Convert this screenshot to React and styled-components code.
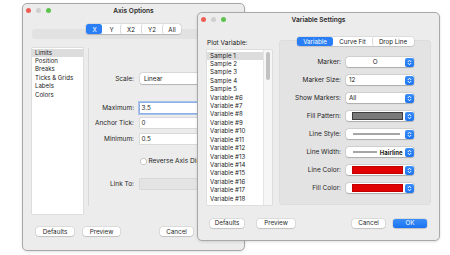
import React from 'react';
import styled, { createGlobalStyle } from 'styled-components';

const BLUE = '#2a7ff6';

const GlobalStyle = createGlobalStyle`
  html, body { margin: 0; padding: 0; background: #fff; }
  body { font-family: Inter, "Noto Sans", sans-serif; color: #222; }
`;

const Desktop = styled.div`
  position: relative;
  width: 450px;
  height: 255px;
  overflow: hidden;
  background: #fff;
`;

// windows sit on a free desktop, so they are placed by coordinates
const Window = styled.div`
  position: absolute;
  left: ${p => p.$x}px;
  top: ${p => p.$y}px;
  width: ${p => p.$w}px;
  height: ${p => p.$h}px;
  box-sizing: border-box;
  background: #ececec;
  border: 1px solid #a8a8a8;
  border-radius: 5px;
  box-shadow: 0 1px 3px rgba(0, 0, 0, 0.12);
  display: flex;
  flex-direction: column;
  overflow: hidden;
`;

const TitleBar = styled.div`
  flex: none;
  height: 13px;
  display: grid;
  grid-template-columns: 1fr auto 1fr;
  align-items: center;
`;

const Lights = styled.div`
  display: flex;
  gap: 5px;
  padding-left: 3px;
`;

const Light = styled.span`
  width: 5px;
  height: 5px;
  border-radius: 50%;
  background: ${p => p.$c};
`;

const Title = styled.div`
  font-size: 6.6px;
  font-weight: 600;
  color: #2b2b2b;
`;

const Segmented = styled.div`
  align-self: center;
  display: flex;
  height: ${p => p.$h}px;
  background: #fff;
  border-radius: 2.5px;
  box-shadow: 0 0 0 0.5px rgba(0, 0, 0, 0.12), 0 0.5px 1px rgba(0, 0, 0, 0.15);
  position: relative;
  z-index: 1;
  margin-top: ${p => p.$mt}px;
`;

const Segment = styled.div`
  width: ${p => p.$w}px;
  display: flex;
  align-items: center;
  justify-content: center;
  font-size: 6.2px;
  color: ${p => (p.$on ? '#fff' : '#222')};
  background: ${p => (p.$on ? BLUE : 'transparent')};
  border-radius: 2.5px;
  border-left: 0.5px solid ${p => (p.$sep ? '#dadada' : 'transparent')};
`;

const Band = styled.div`
  height: 10px;
  margin: -5px 9px 0;
  background: #e2e2e2;
  border-radius: 3px;
`;

const ListBox = styled.div`
  flex: none;
  width: ${p => p.$w}px;
  height: ${p => p.$h}px;
  margin-top: ${p => p.$mt || 0}px;
  background: #fff;
  box-shadow: 0 0 0 0.5px rgba(0, 0, 0, 0.12);
  display: flex;
  overflow: hidden;
`;

const ListItems = styled.div`
  flex: 1;
  padding-top: ${p => p.$pt}px;
`;

const ListItem = styled.div`
  height: 8.43px;
  line-height: 8.43px;
  padding-left: 3px;
  font-size: 6.1px;
  white-space: nowrap;
  background: ${p => (p.$sel ? '#dcdcdc' : 'transparent')};
`;

const ScrollTrack = styled.div`
  flex: none;
  width: 8px;
  background: #f6f6f6;
  border-left: 0.5px solid #e4e4e4;
  display: flex;
  justify-content: center;
  padding-top: 2px;
`;

const ScrollThumb = styled.div`
  width: 3.5px;
  height: 28px;
  border-radius: 2px;
  background: #c2c2c2;
`;

/* ---------- back window ---------- */

const AxisBody = styled.div`
  display: flex;
  padding: 0 9px;
  margin-top: 9px;
`;

const FormArea = styled.div`
  margin-left: 5px;
  height: 158px;
  border-left: 1px solid #d8d8d8;
  display: flex;
  flex-direction: column;
`;

const FormRow = styled.div`
  display: grid;
  grid-template-columns: 45px 90px;
  column-gap: 6px;
  align-items: center;
  height: ${p => p.$h || 10}px;
  margin-top: ${p => p.$mt}px;
`;

const Label = styled.div`
  text-align: right;
  font-size: 6.5px;
  white-space: nowrap;
  color: #1f1f1f;
`;

const TextField = styled.div`
  height: 10px;
  display: flex;
  align-items: center;
  padding-left: 1.5px;
  font-size: 6.3px;
  background: ${p => (p.$disabled ? '#e4e4e4' : '#fff')};
  box-shadow: ${p =>
    p.$focus
      ? '0 0 0 0.5px #6c9ee8, 0 0 0 2px rgba(90, 145, 230, 0.45)'
      : '0 0 0 0.5px rgba(0, 0, 0, 0.16)'};
`;

const CheckRow = styled.label`
  display: flex;
  align-items: center;
  gap: 2.5px;
  padding-left: 1px;
  font-size: 6.5px;
  white-space: nowrap;
`;

const CheckBox = styled.span`
  width: 5px;
  height: 5px;
  background: #fff;
  border-radius: 1.5px;
  box-shadow: 0 0 0 0.5px rgba(0, 0, 0, 0.3);
`;

/* ---------- shared controls ---------- */

const PopUp = styled.div`
  height: ${p => p.$h || 10}px;
  background: #fff;
  border-radius: 2.5px;
  box-shadow: 0 0 0 0.5px rgba(0, 0, 0, 0.14), 0 0.5px 1px rgba(0, 0, 0, 0.18);
  display: flex;
  align-items: center;
  font-size: 6.3px;
`;

const PopValue = styled.span`
  flex: 1;
  padding-left: ${p => (p.$center ? 0 : p.$pl || 3)}px;
  text-align: ${p => (p.$center ? 'center' : 'left')};
`;

const Swatch = styled.span`
  flex: 1;
  height: 8px;
  margin: 0 2px 0 6px;
  box-sizing: border-box;
  background: ${p => p.$c};
  border: 0.5px solid ${p => p.$b};
`;

const Stroke = styled.span`
  flex: ${p => (p.$w ? 'none' : 1)};
  width: ${p => p.$w || 0}px;
  height: 1.5px;
  margin: 0 ${p => (p.$w ? 0 : 5)}px 0 7px;
  background: #a6a6a6;
`;

const StrokeName = styled.span`
  margin: 0 2px 0 auto;
  font-weight: 700;
  font-size: 6px;
`;

const Stepper = styled.span`
  flex: none;
  width: 9px;
  height: 9px;
  margin-right: 0.5px;
  border-radius: 2px;
  background: linear-gradient(#3b8ef8, #1c74f0);
  display: flex;
  align-items: center;
  justify-content: center;
`;

const Chevrons = () => (
  <svg width="5" height="7" viewBox="0 0 5 7">
    <path
      d="M1.1 2.7 L2.5 1.2 L3.9 2.7 M1.1 4.3 L2.5 5.8 L3.9 4.3"
      fill="none"
      stroke="#fff"
      strokeWidth="0.9"
      strokeLinecap="round"
      strokeLinejoin="round"
    />
  </svg>
);

const Footer = styled.div`
  display: flex;
  align-items: center;
  margin-top: ${p => p.$mt}px;
  padding: 0 ${p => p.$pr}px 0 ${p => p.$pl}px;
`;

const Button = styled.div`
  width: ${p => p.$w}px;
  height: ${p => p.$h || 9.5}px;
  margin-left: ${p => p.$ml || 0}px;
  display: flex;
  align-items: center;
  justify-content: center;
  font-size: 6.3px;
  border-radius: 2.5px;
  color: ${p => (p.$primary ? '#fff' : '#2a2a2a')};
  background: ${p => (p.$primary ? 'linear-gradient(#3b8ef8, #1a72f0)' : '#fff')};
  box-shadow: 0 0 0 0.5px rgba(0, 0, 0, 0.12), 0 0.5px 1px rgba(0, 0, 0, 0.22);
`;

const Spacer = styled.div`
  flex: 1;
`;

/* ---------- front window ---------- */

const FrontBody = styled.div`
  display: grid;
  grid-template-columns: 65px 152px;
  column-gap: 7px;
  padding-left: 9px;
`;

const Column = styled.div`
  display: flex;
  flex-direction: column;
`;

const ColumnLabel = styled.div`
  margin-top: 13px;
  line-height: 8px;
  font-size: 6.5px;
`;

const GroupBox = styled.div`
  align-self: stretch;
  height: 165px;
  margin-top: -6px;
  box-sizing: border-box;
  padding-top: 17px;
  background: #e3e3e3;
  border-radius: 4px;
  box-shadow: inset 0 0 0 0.5px rgba(0, 0, 0, 0.05);
`;

const SettingsGrid = styled.div`
  display: grid;
  grid-template-columns: 62px 68px;
  grid-auto-rows: 10px;
  column-gap: 5px;
  row-gap: 8px;
  align-items: center;
`;

const Lights3 = () => (
  <Lights>
    <Light $c="#ee5e57" />
    <Light $c="#cfcfcf" />
    <Light $c="#5ec24f" />
  </Lights>
);

const axisItems = ['Limits', 'Position', 'Breaks', 'Ticks & Grids', 'Labels', 'Colors'];
const variables = [
  'Sample 1', 'Sample 2', 'Sample 3', 'Sample 4', 'Sample 5',
  ...Array.from({ length: 13 }, (_, i) => `Variable #${i + 6}`),
];

const AxisOptions = () => (
  <Window $x={22} $y={3} $w={223} $h={248}>
    <TitleBar>
      <Lights3 />
      <Title>Axis Options</Title>
      <span />
    </TitleBar>
    <Segmented $h={10} $mt={7}>
      <Segment $w={15} $on>X</Segment>
      <Segment $w={17}>Y</Segment>
      <Segment $w={20} $sep>X2</Segment>
      <Segment $w={20} $sep>Y2</Segment>
      <Segment $w={18} $sep>All</Segment>
    </Segmented>
    <Band />
    <AxisBody>
      <ListBox $w={51} $h={166}>
        <ListItems $pt={0.5}>
          {axisItems.map((t, i) => (
            <ListItem key={t} $sel={i === 0}>{t}</ListItem>
          ))}
        </ListItems>
      </ListBox>
      <FormArea>
        <FormRow $mt={25} $h={11}>
          <Label>Scale:</Label>
          <PopUp $h={11}><PopValue $pl={4}>Linear</PopValue></PopUp>
        </FormRow>
        <FormRow $mt={19}>
          <Label>Maximum:</Label>
          <TextField $focus>3.5</TextField>
        </FormRow>
        <FormRow $mt={5}>
          <Label>Anchor Tick:</Label>
          <TextField>0</TextField>
        </FormRow>
        <FormRow $mt={6}>
          <Label>Minimum:</Label>
          <TextField>0.5</TextField>
        </FormRow>
        <FormRow $mt={12}>
          <span />
          <CheckRow><CheckBox />Reverse Axis Direction</CheckRow>
        </FormRow>
        <FormRow $mt={13}>
          <Label>Link To:</Label>
          <TextField $disabled />
        </FormRow>
      </FormArea>
    </AxisBody>
    <Footer $mt={13} $pl={13} $pr={10}>
      <Button $w={38} $h={9}>Defaults</Button>
      <Button $w={37} $h={9} $ml={9}>Preview</Button>
      <Spacer />
      <Button $w={33} $h={9}>Cancel</Button>
      <Button $w={33} $h={9} $ml={8} $primary>OK</Button>
    </Footer>
  </Window>
);

const VariableSettings = () => (
  <Window $x={197} $y={12} $w={243} $h={229}>
    <TitleBar>
      <Lights3 />
      <Title>Variable Settings</Title>
      <span />
    </TitleBar>
    <FrontBody>
      <Column>
        <ColumnLabel>Plot Variable:</ColumnLabel>
        <ListBox $w={65} $h={155} $mt={3}>
          <ListItems $pt={1.5}>
            {variables.map((t, i) => (
              <ListItem key={t} $sel={i === 0}>{t}</ListItem>
            ))}
          </ListItems>
          <ScrollTrack><ScrollThumb /></ScrollTrack>
        </ListBox>
      </Column>
      <Column>
        <Segmented $h={9} $mt={11}>
          <Segment $w={35} $on>Variable</Segment>
          <Segment $w={38}>Curve Fit</Segment>
          <Segment $w={41} $sep>Drop Line</Segment>
        </Segmented>
        <GroupBox>
          <SettingsGrid>
            <Label>Marker:</Label>
            <PopUp><PopValue $center>O</PopValue><Stepper><Chevrons /></Stepper></PopUp>
            <Label>Marker Size:</Label>
            <PopUp><PopValue>12</PopValue><Stepper><Chevrons /></Stepper></PopUp>
            <Label>Show Markers:</Label>
            <PopUp><PopValue>All</PopValue><Stepper><Chevrons /></Stepper></PopUp>
            <Label>Fill Pattern:</Label>
            <PopUp><Swatch $c="#7a7a7a" $b="#3e3e3e" /><Stepper><Chevrons /></Stepper></PopUp>
            <Label>Line Style:</Label>
            <PopUp><Stroke /><Stepper><Chevrons /></Stepper></PopUp>
            <Label>Line Width:</Label>
            <PopUp><Stroke $w={24} /><StrokeName>Hairline</StrokeName><Stepper><Chevrons /></Stepper></PopUp>
            <Label>Line Color:</Label>
            <PopUp><Swatch $c="#e00000" $b="#c20000" /><Stepper><Chevrons /></Stepper></PopUp>
            <Label>Fill Color:</Label>
            <PopUp><Swatch $c="#e00000" $b="#c20000" /><Stepper><Chevrons /></Stepper></PopUp>
          </SettingsGrid>
        </GroupBox>
      </Column>
    </FrontBody>
    <Footer $mt={13.5} $pl={12} $pr={12}>
      <Button $w={34}>Defaults</Button>
      <Button $w={38} $ml={13}>Preview</Button>
      <Spacer />
      <Button $w={33}>Cancel</Button>
      <Button $w={34} $ml={8} $primary>OK</Button>
    </Footer>
  </Window>
);

const App = () => (
  <>
    <GlobalStyle />
    <Desktop>
      <AxisOptions />
      <VariableSettings />
    </Desktop>
  </>
);

export default App;
